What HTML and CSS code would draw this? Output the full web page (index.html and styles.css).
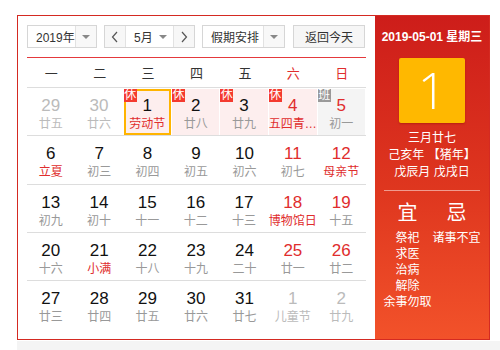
FILE: index.html
```html
<!DOCTYPE html>
<html>
<head>
<meta charset="utf-8">
<link rel="stylesheet" href="styles.css">
</head>
<body>
<div class="cal">
  <div class="main">
    <div class="controls">
      <div class="sel sel-year"><span class="sel-text">2019年</span><span class="sel-arrow"><i class="tri"></i></span></div>
      <div class="month-group">
        <span class="nav"><svg width="8" height="12" viewBox="0 0 8 12"><polyline points="6,1 1.5,6 6,11" fill="none" stroke="#555" stroke-width="1.2"/></svg></span>
        <span class="month"><span class="sel-text">5月</span><i class="tri"></i></span>
        <span class="nav"><svg width="8" height="12" viewBox="0 0 8 12"><polyline points="2,1 6.5,6 2,11" fill="none" stroke="#555" stroke-width="1.2"/></svg></span>
      </div>
      <div class="sel sel-holiday"><span class="sel-text">假期安排</span><span class="sel-arrow"><i class="tri"></i></span></div>
      <div class="btn-today">返回今天</div>
    </div>
    <div class="weekdays">
      <span>一</span><span>二</span><span>三</span><span>四</span><span>五</span><span class="we">六</span><span class="we">日</span>
    </div>
    <div class="grid">
      <div class="row">
        <div class="cell other"><b>29</b><em>廿五</em></div>
        <div class="cell other"><b>30</b><em>廿六</em></div>
        <div class="cell rest selected"><i class="badge">休</i><b>1</b><em class="fest">劳动节</em></div>
        <div class="cell rest"><i class="badge">休</i><b>2</b><em>廿八</em></div>
        <div class="cell rest"><i class="badge">休</i><b>3</b><em>廿九</em></div>
        <div class="cell rest wkend" title="五四青年节"><i class="badge">休</i><b>4</b><em class="fest">五四青…</em></div>
        <div class="cell work wkend"><i class="badge gray">班</i><b>5</b><em>初一</em></div>
      </div>
      <div class="row">
        <div class="cell"><b>6</b><em class="fest">立夏</em></div>
        <div class="cell"><b>7</b><em>初三</em></div>
        <div class="cell"><b>8</b><em>初四</em></div>
        <div class="cell"><b>9</b><em>初五</em></div>
        <div class="cell"><b>10</b><em>初六</em></div>
        <div class="cell wkend"><b>11</b><em>初七</em></div>
        <div class="cell wkend"><b>12</b><em class="fest">母亲节</em></div>
      </div>
      <div class="row">
        <div class="cell"><b>13</b><em>初九</em></div>
        <div class="cell"><b>14</b><em>初十</em></div>
        <div class="cell"><b>15</b><em>十一</em></div>
        <div class="cell"><b>16</b><em>十二</em></div>
        <div class="cell"><b>17</b><em>十三</em></div>
        <div class="cell wkend"><b>18</b><em class="fest">博物馆日</em></div>
        <div class="cell wkend"><b>19</b><em>十五</em></div>
      </div>
      <div class="row">
        <div class="cell"><b>20</b><em>十六</em></div>
        <div class="cell"><b>21</b><em class="fest">小满</em></div>
        <div class="cell"><b>22</b><em>十八</em></div>
        <div class="cell"><b>23</b><em>十九</em></div>
        <div class="cell"><b>24</b><em>二十</em></div>
        <div class="cell wkend"><b>25</b><em>廿一</em></div>
        <div class="cell wkend"><b>26</b><em>廿二</em></div>
      </div>
      <div class="row">
        <div class="cell"><b>27</b><em>廿三</em></div>
        <div class="cell"><b>28</b><em>廿四</em></div>
        <div class="cell"><b>29</b><em>廿五</em></div>
        <div class="cell"><b>30</b><em>廿六</em></div>
        <div class="cell"><b>31</b><em>廿七</em></div>
        <div class="cell other"><b>1</b><em>儿童节</em></div>
        <div class="cell other"><b>2</b><em>廿九</em></div>
      </div>
    </div>
  </div>
  <div class="side">
    <div class="side-date">2019-05-01 星期三</div>
    <div class="big-day">1</div>
    <div class="lunar">
      <div>三月廿七</div>
      <div>己亥年 【猪年】</div>
      <div>戊辰月 戊戌日</div>
    </div>
    <div class="divider"></div>
    <div class="yiji">
      <div class="col">
        <div class="yj-title">宜</div>
        <div>祭祀</div><div>求医</div><div>治病</div><div>解除</div><div>余事勿取</div>
      </div>
      <div class="col">
        <div class="yj-title">忌</div>
        <div>诸事不宜</div>
      </div>
    </div>
  </div>
</div>
<div class="below"></div>
</body>
</html>
```
FILE: styles.css
```css
* { box-sizing: border-box; }
html, body { margin: 0; padding: 0; background: #fff; }
body {
  font-family: "Liberation Sans", "Noto Sans CJK SC", sans-serif;
  font-size: 12px;
  color: #333;
  padding: 15px 0 0 17px;
}
.cal {
  display: flex;
  width: 473px;
  height: 325px;
  border: 1px solid #d42a22;
}
.main {
  width: 357px;
  padding: 9px 9px 0 9px;
}
.controls {
  display: flex;
  height: 23px;
  gap: 7px;
}
.sel, .month-group, .btn-today {
  display: flex;
  height: 23px;
  border: 1px solid #d6d6d6;
  background: #fff;
  align-items: stretch;
  white-space: nowrap;
}
.sel-year { width: 70px; }
.sel-holiday { width: 83px; }
.sel-text {
  flex: 1;
  display: flex;
  align-items: center;
  padding-left: 8px;
  font-size: 12px;
  color: #333;
}
.sel-arrow {
  width: 21px;
  border-left: 1px solid #e2e2e2;
  background: #f8f8f8;
  display: flex;
  align-items: center;
  justify-content: center;
}
.tri {
  display: block;
  width: 0; height: 0;
  border-left: 4px solid transparent;
  border-right: 4px solid transparent;
  border-top: 4px solid #888;
}
.month-group { width: 91px; }
.nav {
  width: 20px;
  background: #f7f7f7;
  display: flex;
  align-items: center;
  justify-content: center;
}
.month {
  flex: 1;
  display: flex;
  align-items: center;
  border-left: 1px solid #e2e2e2;
  border-right: 1px solid #e2e2e2;
  padding-right: 6px;
}
.month .sel-text { padding-left: 8px; }
.btn-today {
  width: 72px;
  margin-left: 1px;
  background: #f6f6f6;
  align-items: center;
  justify-content: center;
  font-size: 12px;
  color: #333;
}
.weekdays {
  display: grid;
  grid-template-columns: repeat(7, 1fr);
  margin-top: 9px;
  border-top: 1px solid #e4393c;
  height: 30px;
  align-items: center;
  text-align: center;
  font-size: 13px;
  color: #333;
}
.weekdays .we { color: #e02d2d; }
.grid { border-top: 1px solid #ddd; }
.row {
  display: grid;
  grid-template-columns: repeat(7, 1fr);
  height: 48.3px;
  border-bottom: 1px solid #ddd;
  padding: 1px 0 0 0;
}
.row:last-child { border-bottom: none; }
.cell {
  position: relative;
  margin: 0 1px 0 0;
  display: flex;
  flex-direction: column;
  align-items: center;
  padding-top: 7px;
}
.cell b {
  font-weight: normal;
  font-size: 17px;
  line-height: 20px;
  color: #111;
}
.cell em {
  font-style: normal;
  font-size: 12px;
  line-height: 16px;
  color: #999;
  white-space: nowrap;
}
.cell.wkend b { color: #e02d2d; }
.cell em.fest { color: #e02d2d; }
.cell.other b, .cell.other em { color: #bbb; }
.cell.rest { background: #fdeeee; }
.cell.work { background: #f4f4f4; }
.cell.selected { border: 2px solid #ffb400; padding-top: 5px; }
.badge {
  position: absolute;
  left: 0; top: 0;
  width: 13px; height: 13px;
  background: #f43a2f;
  color: #fff;
  font-style: normal;
  font-size: 12px;
  line-height: 13px;
  text-align: center;
}
.cell.selected .badge { left: -2px; top: -2px; }
.badge.gray { background: #999; }
.side {
  flex: 1;
  background: linear-gradient(180deg, #cd1d1a 0%, #df371f 55%, #f2522a 100%);
  color: #fff;
  display: flex;
  flex-direction: column;
  align-items: center;
  padding-top: 13px;
}
.side-date {
  font-size: 12px;
  font-weight: bold;
  line-height: 16px;
}
.big-day {
  margin-top: 13px;
  width: 66px;
  height: 65px;
  background: #ffb800;
  border-radius: 2px;
  box-shadow: 0 1px 2px rgba(120,0,0,0.35);
  font-size: 50px;
  font-weight: 300;
  line-height: 65px;
  text-align: center;
  font-family: "Open Sans", "Liberation Sans", sans-serif;
}
.lunar {
  margin-top: 7px;
  text-align: center;
  line-height: 17px;
  font-size: 12px;
}
.divider {
  margin-top: 9px;
  width: 96px;
  height: 1px;
  background: rgba(255,255,255,0.5);
}
.yiji {
  display: flex;
  width: 98px;
  margin-top: 10px;
}
.col {
  flex: 1;
  text-align: center;
  font-size: 12px;
  line-height: 16px;
}
.yj-title {
  font-size: 20px;
  line-height: 24px;
  margin-bottom: 5px;
}
.below {
  margin-top: 1px;
  height: 20px;
  width: 483px;
  background: #f4f4f4;
}
```
